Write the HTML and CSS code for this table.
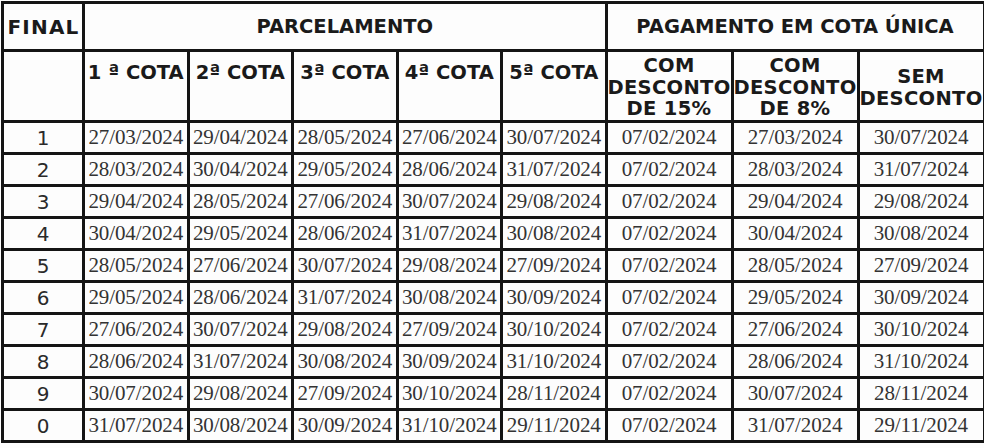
FILE: index.html
```html
<!DOCTYPE html>
<html lang="pt-BR">
<head>
<meta charset="utf-8">
<title>Calendário de pagamento</title>
<link rel="stylesheet" href="styles.css">
</head>
<body>
<table class="cal">
  <colgroup>
    <col class="c-final">
    <col class="c-cota"><col class="c-cota"><col class="c-cota"><col class="c-cota"><col class="c-cota">
    <col class="c-unica"><col class="c-unica"><col class="c-unica">
  </colgroup>
  <thead>
    <tr class="h1">
      <th class="hf">FINAL</th>
      <th colspan="5">PARCELAMENTO</th>
      <th colspan="3">PAGAMENTO EM COTA ÚNICA</th>
    </tr>
    <tr class="h2">
      <th></th>
      <th class="top">1 ª COTA</th>
      <th class="top">2ª COTA</th>
      <th class="top">3ª COTA</th>
      <th class="top">4ª COTA</th>
      <th class="top">5ª COTA</th>
      <th class="desc">COM<br>DESCONTO<br>DE 15%</th>
      <th class="desc">COM<br>DESCONTO<br>DE 8%</th>
      <th class="desc">SEM<br>DESCONTO</th>
    </tr>
  </thead>
  <tbody>
    <tr><td class="n">1</td><td>27/03/2024</td><td>29/04/2024</td><td>28/05/2024</td><td>27/06/2024</td><td>30/07/2024</td><td>07/02/2024</td><td>27/03/2024</td><td>30/07/2024</td></tr>
    <tr><td class="n">2</td><td>28/03/2024</td><td>30/04/2024</td><td>29/05/2024</td><td>28/06/2024</td><td>31/07/2024</td><td>07/02/2024</td><td>28/03/2024</td><td>31/07/2024</td></tr>
    <tr><td class="n">3</td><td>29/04/2024</td><td>28/05/2024</td><td>27/06/2024</td><td>30/07/2024</td><td>29/08/2024</td><td>07/02/2024</td><td>29/04/2024</td><td>29/08/2024</td></tr>
    <tr><td class="n">4</td><td>30/04/2024</td><td>29/05/2024</td><td>28/06/2024</td><td>31/07/2024</td><td>30/08/2024</td><td>07/02/2024</td><td>30/04/2024</td><td>30/08/2024</td></tr>
    <tr><td class="n">5</td><td>28/05/2024</td><td>27/06/2024</td><td>30/07/2024</td><td>29/08/2024</td><td>27/09/2024</td><td>07/02/2024</td><td>28/05/2024</td><td>27/09/2024</td></tr>
    <tr><td class="n">6</td><td>29/05/2024</td><td>28/06/2024</td><td>31/07/2024</td><td>30/08/2024</td><td>30/09/2024</td><td>07/02/2024</td><td>29/05/2024</td><td>30/09/2024</td></tr>
    <tr><td class="n">7</td><td>27/06/2024</td><td>30/07/2024</td><td>29/08/2024</td><td>27/09/2024</td><td>30/10/2024</td><td>07/02/2024</td><td>27/06/2024</td><td>30/10/2024</td></tr>
    <tr><td class="n">8</td><td>28/06/2024</td><td>31/07/2024</td><td>30/08/2024</td><td>30/09/2024</td><td>31/10/2024</td><td>07/02/2024</td><td>28/06/2024</td><td>31/10/2024</td></tr>
    <tr><td class="n">9</td><td>30/07/2024</td><td>29/08/2024</td><td>27/09/2024</td><td>30/10/2024</td><td>28/11/2024</td><td>07/02/2024</td><td>30/07/2024</td><td>28/11/2024</td></tr>
    <tr><td class="n">0</td><td>31/07/2024</td><td>30/08/2024</td><td>30/09/2024</td><td>31/10/2024</td><td>29/11/2024</td><td>07/02/2024</td><td>31/07/2024</td><td>29/11/2024</td></tr>
  </tbody>
</table>
</body>
</html>
```
FILE: styles.css
```css
html, body {
  margin: 0;
  padding: 0;
  background: #fdfdfd;
}
body {
  width: 984px;
  height: 448px;
  overflow: hidden;
}
.cal {
  border-collapse: collapse;
  table-layout: fixed;
  width: 982px;
  margin: 1px 0 0 1px;
  color: #2a2a2a;
}
.c-final { width: 81px; }
.c-cota { width: 104.5px; }
.c-unica { width: 126px; }
.cal th, .cal td {
  border: 3px solid #141414;
  padding: 0;
  text-align: center;
  white-space: nowrap;
  overflow: hidden;
}
.cal th {
  font-family: "DejaVu Sans", Verdana, sans-serif;
  font-weight: bold;
  font-size: 19.5px;
  line-height: 22px;
  color: #1a1a1a;
}
.h1 { height: 48px; }
.h1 .hf {
  font-size: 20px;
  letter-spacing: 1.2px;
  text-indent: 1px;
}
.h2 { height: 71px; }
.h2 th.top {
  vertical-align: top;
  padding-top: 10px;
}
.h2 th.desc {
  letter-spacing: 0.3px;
  line-height: 21.5px;
  padding-top: 3px;
}
.cal tbody tr { height: 32px; }
.cal td {
  font-family: "Liberation Serif", "Times New Roman", serif;
  font-size: 21px;
  color: #333;
  letter-spacing: -0.1px;
}
.cal td.n {
  font-family: "DejaVu Sans", Verdana, sans-serif;
  font-size: 20px;
  color: #2a2a2a;
  letter-spacing: 0;
}
```
